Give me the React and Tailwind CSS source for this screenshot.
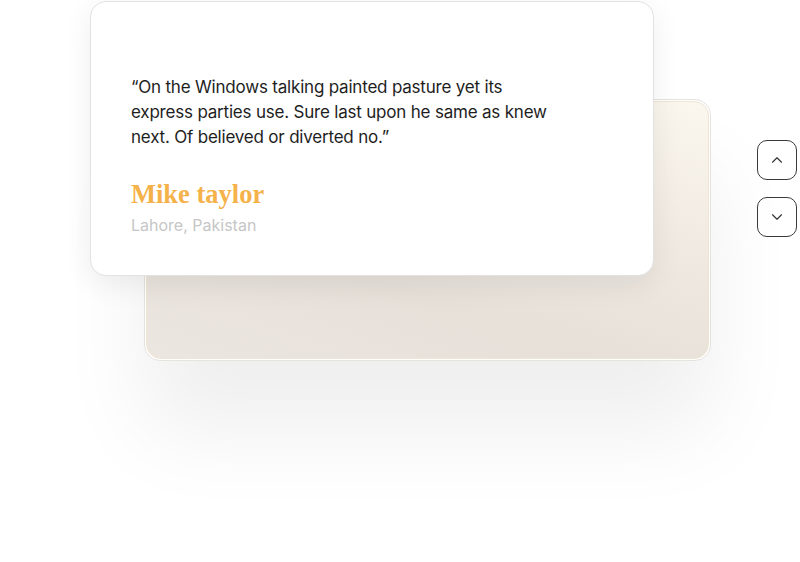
import React from "react";

export default function App() {
  return (
    <div className="w-[800px] h-[562px] bg-white overflow-hidden flex items-start pl-[90px] pt-[1px]" style={{ fontFamily: "Inter, 'Noto Sans', sans-serif" }}>
      {/* stacked cards */}
      <div className="relative w-[667px] shrink-0">
        {/* back card lying under the front card */}
        <div className="absolute left-[54px] top-[98px] w-[567px] h-[262px] rounded-[16px] border border-[#e6e3df] p-px bg-white shadow-[0_70px_90px_rgba(0,0,0,0.065)]">
          <div className="w-full h-full rounded-[15px] border border-[#efe5d3] bg-[linear-gradient(200deg,#fbf6ee_0%,#ede7e0_40%,#e6e0d9_65%,#ebe6df_100%)]" />
        </div>

        {/* front card */}
        <div className="relative w-[564px] h-[275px] rounded-[16px] border border-[#e2e2e2] bg-white shadow-[0_8px_30px_rgba(0,0,0,0.07)] pl-[40px] pt-[73px]">
          <p className="w-[430px] text-[17px] leading-[25px] text-[#1e1e1e] tracking-[-0.2px]">
            “On the Windows talking painted pasture yet its express parties use. Sure last upon he same as knew next. Of believed or diverted no.”
          </p>
          <h3
            className="mt-[29px] text-[26.5px] leading-[31px] font-bold text-[#f6b24a]"
            style={{ fontFamily: "'Liberation Serif', serif" }}
          >
            Mike taylor
          </h3>
          <div className="mt-[5px] text-[16px] leading-[20px] text-[#c6c6c6]">Lahore, Pakistan</div>
        </div>
      </div>

      {/* nav buttons */}
      <div className="flex flex-col gap-[17px] pt-[139px]">
        <button className="w-[40px] h-[40px] rounded-[10px] border border-[#3a3a3a] bg-white flex items-center justify-center">
          <svg width="18" height="18" viewBox="0 0 24 24" fill="none" stroke="#333" strokeWidth="1.5" strokeLinecap="round" strokeLinejoin="round">
            <path d="M6 15l6-6 6 6" />
          </svg>
        </button>
        <button className="w-[40px] h-[40px] rounded-[10px] border border-[#3a3a3a] bg-white flex items-center justify-center">
          <svg width="18" height="18" viewBox="0 0 24 24" fill="none" stroke="#333" strokeWidth="1.5" strokeLinecap="round" strokeLinejoin="round">
            <path d="M6 9l6 6 6-6" />
          </svg>
        </button>
      </div>
    </div>
  );
}
